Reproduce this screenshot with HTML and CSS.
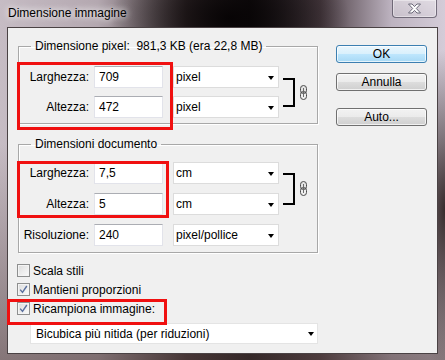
FILE: index.html
```html
<!DOCTYPE html>
<html lang="it">
<head>
    <meta charset="UTF-8">
    <meta name="viewport" content="width=device-width, initial-scale=1.0">
    <title>Dimensione immagine</title>
    <link rel="stylesheet" href="styles.css">
</head>
<body>
    <div class="window">
        <div class="titlebar">
            <span class="title">Dimensione immagine</span>
            <button class="close" aria-label="Chiudi">
                <svg width="15" height="11" viewBox="0 0 15 11">
                    <path d="M1.5 1 H5 L7.5 3.6 L10 1 H13.5 L9.3 5.5 L13.5 10 H10 L7.5 7.4 L5 10 H1.5 L5.7 5.5 Z" fill="#fff" stroke="#6a6878" stroke-width="1"/>
                </svg>
            </button>
        </div>

        <div class="client">
            <div class="main">
                <fieldset class="group group-pixel">
                    <legend>Dimensione pixel:&nbsp; 981,3 KB (era 22,8 MB)</legend>
                    <div class="linked">
                        <div class="rows">
                            <div class="row">
                                <span class="label">Larghezza:</span>
                                <span class="field">709</span>
                                <span class="select">pixel<i class="arrow"></i></span>
                            </div>
                            <div class="row">
                                <span class="label">Altezza:</span>
                                <span class="field">472</span>
                                <span class="select">pixel<i class="arrow"></i></span>
                            </div>
                        </div>
                        <span class="bracket bracket-pixel"></span>
                        <svg class="chain" width="7" height="15" viewBox="0 0 7 15">
                            <rect x="0.5" y="0.5" width="6" height="8" rx="3" fill="#e4e4e4" stroke="#4a4a4a"/>
                            <rect x="0.5" y="6.5" width="6" height="8" rx="3" fill="none" stroke="#4a4a4a"/>
                            <line x1="3.5" y1="3" x2="3.5" y2="12" stroke="#6a6a6a"/>
                        </svg>
                    </div>
                </fieldset>

                <fieldset class="group group-doc">
                    <legend>Dimensioni documento</legend>
                    <div class="linked">
                        <div class="rows">
                            <div class="row">
                                <span class="label">Larghezza:</span>
                                <span class="field">7,5</span>
                                <span class="select">cm<i class="arrow"></i></span>
                            </div>
                            <div class="row">
                                <span class="label">Altezza:</span>
                                <span class="field">5</span>
                                <span class="select">cm<i class="arrow"></i></span>
                            </div>
                        </div>
                        <span class="bracket bracket-doc"></span>
                        <svg class="chain" width="7" height="15" viewBox="0 0 7 15">
                            <rect x="0.5" y="0.5" width="6" height="8" rx="3" fill="#e4e4e4" stroke="#4a4a4a"/>
                            <rect x="0.5" y="6.5" width="6" height="8" rx="3" fill="none" stroke="#4a4a4a"/>
                            <line x1="3.5" y1="3" x2="3.5" y2="12" stroke="#6a6a6a"/>
                        </svg>
                    </div>
                    <div class="row row-res">
                        <span class="label">Risoluzione:</span>
                        <span class="field">240</span>
                        <span class="select">pixel/pollice<i class="arrow"></i></span>
                    </div>
                </fieldset>

                <div class="options">
                    <div class="check-row">
                        <span class="checkbox"></span>
                        <span>Scala stili</span>
                    </div>
                    <div class="check-row">
                        <span class="checkbox">
                            <svg width="11" height="11" viewBox="0 0 11 11"><path d="M2.2 5.6 L4.5 8.4 L8.8 2" fill="none" stroke="#5a6f9e" stroke-width="1.4"/></svg>
                        </span>
                        <span>Mantieni proporzioni</span>
                    </div>
                    <div class="check-row">
                        <span class="checkbox">
                            <svg width="11" height="11" viewBox="0 0 11 11"><path d="M2.2 5.6 L4.5 8.4 L8.8 2" fill="none" stroke="#5a6f9e" stroke-width="1.4"/></svg>
                        </span>
                        <span>Ricampiona immagine:</span>
                    </div>
                </div>

                <span class="select select-wide">Bicubica più nitida (per riduzioni)<i class="arrow"></i></span>
            </div>

            <div class="buttons">
                <button class="btn btn-default">OK</button>
                <button class="btn">Annulla</button>
                <button class="btn btn-auto">Auto...</button>
            </div>
        </div>

        <!-- red annotation boxes drawn over the dialog -->
        <div class="mark mark-pixel"></div>
        <div class="mark mark-doc"></div>
        <div class="mark mark-resample"></div>
    </div>
</body>
</html>
```

FILE: styles.css
```css
body {
    margin: 0;
    padding: 0;
    font-family: "Liberation Sans", Arial, sans-serif;
    font-size: 12px;
    color: #000;
}

.window {
    position: relative;
    width: 445px;
    height: 360px;
    display: flex;
    flex-direction: column;
    overflow: hidden;
    background:
        radial-gradient(ellipse 120px 70px at 230px 18px, rgba(6, 3, 4, 0.95), rgba(6, 3, 4, 0) 100%),
        radial-gradient(ellipse 40px 160px at 445px 210px, rgba(40, 28, 28, 0.9), rgba(40, 28, 28, 0) 100%),
        linear-gradient(180deg, rgba(0, 0, 0, 0) 40%, rgba(80, 60, 58, 0.55) 100%),
        linear-gradient(90deg, #c6bcc4 0%, #b4a8b0 22%, #3a2e30 42%, #141012 56%, #4a3c42 72%, #bdb3c0 88%, #d4ccd8 100%);
}

.titlebar {
    height: 27px;
    display: flex;
    align-items: flex-start;
}

.title {
    padding-left: 8px;
    line-height: 26px;
    font-size: 12px;
    text-shadow: 0 0 6px #fff, 0 0 10px rgba(255, 255, 255, 0.7);
}

.close {
    margin: -1px 8px 0 auto;
    width: 45px;
    height: 19px;
    padding: 0;
    border: 1px solid rgba(70, 62, 80, 0.7);
    border-radius: 0 0 4px 4px;
    background: linear-gradient(180deg, rgba(255, 255, 255, 0.35), rgba(255, 255, 255, 0.15));
    box-shadow: inset 0 0 0 1px rgba(255, 255, 255, 0.4);
    display: flex;
    align-items: center;
    justify-content: center;
}

.client {
    height: 327px;
    margin: 0 7px;
    box-sizing: border-box;
    border: 1px solid #4a4244;
    background-color: #f0f0f0;
    display: flex;
}

.main {
    padding: 11px 0 0 10px;
    width: 300px;
}

.group {
    width: 300px;
    box-sizing: border-box;
    margin: 0;
    border: 1px solid #a8a8a8;
    box-shadow: inset 1px 1px 0 #fff, 1px 1px 0 #fff;
}

.group legend {
    margin-left: 12px;
    padding: 0 4px;
    line-height: 14px;
}

.group-pixel {
    padding: 13px 0 5px 0;
}

.group-doc {
    margin-top: 13px;
    padding: 11px 0 6px 0;
}

.linked {
    display: flex;
    align-items: center;
}

.rows {
    display: flex;
    flex-direction: column;
}

.group-pixel .rows {
    gap: 8px;
}

.group-doc .rows {
    gap: 9px;
}

.row {
    display: flex;
    align-items: center;
    height: 22px;
}

.row-res {
    margin-top: 9px;
}

.label {
    width: 70px;
    margin-right: 5px;
    text-align: right;
}

.field {
    width: 69px;
    height: 22px;
    box-sizing: border-box;
    padding-left: 4px;
    line-height: 20px;
    background-color: #fff;
    border: 1px solid #e2e3ea;
    border-top-color: #abadb3;
}

.select {
    position: relative;
    width: 106px;
    height: 22px;
    margin-left: 10px;
    box-sizing: border-box;
    padding-left: 2px;
    line-height: 21px;
    background-color: #fff;
    border: 1px solid #dcdcdc;
}

.arrow {
    position: absolute;
    right: 4px;
    top: 9px;
    width: 0;
    height: 0;
    border-top: 4px solid #000;
    border-left: 3.5px solid transparent;
    border-right: 3.5px solid transparent;
}

.bracket {
    margin-left: 4px;
    width: 12px;
    box-sizing: border-box;
    border: 2px solid #000;
    border-left: none;
}

.bracket-pixel {
    height: 29px;
}

.bracket-doc {
    height: 32px;
}

.chain {
    margin-left: 5px;
}

.options {
    margin-top: 8px;
    margin-left: -1px;
}

.check-row {
    display: flex;
    align-items: center;
    height: 19px;
    gap: 3px;
}

.checkbox {
    width: 13px;
    height: 13px;
    box-sizing: border-box;
    border: 1px solid #8e8f8f;
    background: linear-gradient(135deg, #dcdcdc, #fbfbfb);
    box-shadow: inset 0 0 0 1px #f4f4f4;
    display: flex;
    align-items: center;
    justify-content: center;
}

.select-wide {
    display: block;
    width: 288px;
    height: 21px;
    margin: 5px 0 0 12px;
    padding-left: 5px;
    line-height: 20px;
    border-color: #e4e4e4;
}

.select-wide .arrow {
    right: 3px;
    top: 8px;
}

.buttons {
    display: flex;
    flex-direction: column;
    padding-top: 17px;
    margin-left: 18px;
}

.btn {
    width: 91px;
    height: 18px;
    padding: 0;
    font-family: "Liberation Sans", Arial, sans-serif;
    font-size: 12px;
    color: #000;
    border: 1px solid #707070;
    border-radius: 3px;
    background: linear-gradient(180deg, #f2f2f2 0%, #ebebeb 50%, #dddddd 51%, #cfcfcf 100%);
    box-shadow: inset 0 0 0 1px rgba(255, 255, 255, 0.7);
    margin-bottom: 10px;
}

.btn-default {
    border-color: #3c7fb1;
    background: linear-gradient(180deg, #eaf6fd 0%, #d9f0fc 50%, #bee6fd 51%, #a7d9f5 100%);
}

.btn-auto {
    margin-top: 7px;
}

.mark {
    position: absolute;
    box-sizing: border-box;
    border: 3px solid #f01010;
}

.mark-pixel {
    left: 17px;
    top: 62px;
    width: 156px;
    height: 68px;
}

.mark-doc {
    left: 17px;
    top: 161px;
    width: 152px;
    height: 57px;
}

.mark-resample {
    left: 7px;
    top: 299px;
    width: 160px;
    height: 26px;
}
```
